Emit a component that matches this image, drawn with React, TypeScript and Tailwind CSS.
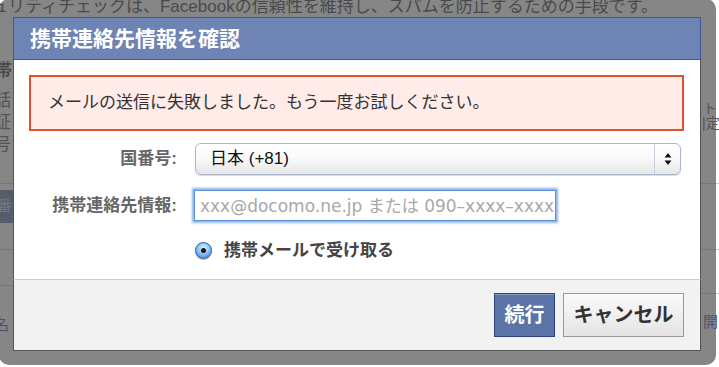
export default function App() {
  return (
    <div className="relative w-[719px] h-[367px] overflow-hidden bg-white font-['Liberation_Sans','Noto_Sans_CJK_JP',sans-serif]">
      {/* background page behind the overlay */}
      <div className="flex flex-col text-[#333]">
        <div className="mt-[-3px] ml-[-43px] h-[20px] whitespace-nowrap text-[17px] leading-[20px]">
          セキュリティチェックは、Facebookの信頼性を維持し、スパムを防止するための手段です。
        </div>
        <div className="flex justify-between">
          <div className="flex w-[13px] flex-col">
            <div className="mt-[44px] ml-[-5px] whitespace-nowrap text-[17px] font-bold leading-[20px]">帯</div>
            <div className="mt-[9px] ml-[-6px] flex flex-col text-[17px] leading-[22px] text-[#555]">
              <span>話</span>
              <span>証</span>
              <span>号</span>
            </div>
            <div className="mt-[27px] h-px w-[40px] bg-[#ccc]" />
            <div className="mt-[6px] ml-[-27px] flex h-[33px] w-[40px] items-center justify-end pr-[1px] bg-[#5b74a8] text-[15px] text-[#ccd]">番</div>
            <div className="mt-[26px] h-px w-[40px] bg-[#ccc]" />
            <div className="mt-[35px] h-px w-[40px] bg-[#ccc]" />
            <div className="mt-[30px] ml-[-6px] whitespace-nowrap text-[15px] leading-[18px] text-[#3b5998]">名</div>
          </div>
          <div className="flex w-[18px] flex-col">
            <div className="mt-[84px] pl-[2px] text-[14px] leading-[15px] text-[#555]">ト</div>
            <div className="pl-[1px] whitespace-nowrap text-[14px] leading-[15px] text-[#555]">|定</div>
            <div className="mt-[52px] h-px w-[40px] bg-[#ccc]" />
            <div className="mt-[65px] h-px w-[40px] bg-[#ccc]" />
            <div className="mt-[43px] h-px w-[40px] bg-[#ccc]" />
            <div className="mt-[19px] pl-[2px] text-[15px] leading-[18px] text-[#3b5998]">開</div>
          </div>
        </div>
      </div>

      {/* overlay frame with dialog */}
      <div className="absolute left-[-1px] top-[-1px] h-[366px] w-[717px] rounded-[10px] bg-[rgba(82,82,82,0.7)] pl-[14px] pt-[18px]">
        <div className="flex w-[688px] flex-col">
          {/* header */}
          <div className="flex h-[43px] items-center border border-[#3b5998] bg-[#6d84b4] pl-[16px] text-[21px] font-bold text-white">
            携帯連絡先情報を確認
          </div>
          {/* body */}
          <div className="flex h-[219px] flex-col border-x border-[#555] bg-white pl-[15px] pr-[16px] pt-[15px]">
            <div className="flex h-[56px] items-center border-2 border-[#e0502f] bg-[#ffebe8] pl-[17px] text-[17px] text-[#333]">
              メールの送信に失敗しました。もう一度お試しください。
            </div>
            {/* country row */}
            <div className="mt-[12px] flex items-center">
              <div className="w-[148px] text-right text-[17px] font-bold text-[#666]">国番号:</div>
              <div className="ml-[18px] flex h-[32px] w-[486px] items-center rounded-[6px] border border-[#aab6cc] bg-[linear-gradient(#ffffff,#fafafa_45%,#e6e6e6)] shadow-[0_1px_1px_rgba(0,0,0,0.15)]">
                <div className="flex-1 pl-[14px] text-[17px] text-[#111]">日本 (+81)</div>
                <div className="flex h-full w-[26px] items-center justify-center border-l border-[#c8cfdc]">
                  <svg width="8" height="14" viewBox="0 0 8 14">
                    <path d="M4 1 L7.5 5.5 H0.5 Z" fill="#111" />
                    <path d="M4 13 L7.5 8.5 H0.5 Z" fill="#111" />
                  </svg>
                </div>
              </div>
            </div>
            {/* contact row */}
            <div className="mt-[15px] flex items-center">
              <div className="w-[148px] text-right text-[17px] font-bold text-[#666]">携帯連絡先情報:</div>
              <input
                readOnly
                placeholder="xxx@docomo.ne.jp または 090–xxxx–xxxx"
                className="ml-[17px] h-[31px] w-[362px] border border-[#5f95d8] bg-white pl-[5px] font-['DejaVu_Sans','Noto_Sans_CJK_JP',sans-serif] text-[17px] text-[#333] placeholder:text-[#a8a8a8] shadow-[0_0_2px_2px_rgba(100,155,225,0.75)] outline-none"
              />
            </div>
            {/* radio row */}
            <div className="mt-[17px] flex items-center pl-[166px]">
              <div className="flex h-[17px] w-[17px] items-center justify-center rounded-full border border-[#2f5a9c] bg-[radial-gradient(circle_at_50%_35%,#e4f3ff_0%,#8cc4f4_45%,#2f72d0_100%)] shadow-[0_1px_1px_rgba(0,0,0,0.3)]">
                <div className="h-[5px] w-[5px] rounded-full bg-[#1a1a1a]" />
              </div>
              <div className="ml-[12px] text-[17px] font-bold text-[#444]">携帯メールで受け取る</div>
            </div>
          </div>
          {/* footer */}
          <div className="flex justify-end gap-[8px] border-x border-b border-t border-x-[#555] border-b-[#555] border-t-[#ccc] bg-[#f2f2f2] pb-[13px] pr-[16px] pt-[13px]">
            <div className="flex h-[44px] w-[61px] items-center justify-center border border-[#29447e] bg-[#5b74a8] text-[20px] font-bold text-white shadow-[inset_0_1px_0_#8a9cc2]">
              続行
            </div>
            <div className="flex h-[44px] w-[121px] items-center justify-center border border-[#999] bg-[linear-gradient(#fafafa,#e4e4e4)] text-[20px] font-bold text-[#333]">
              キャンセル
            </div>
          </div>
        </div>
      </div>
    </div>
  );
}
